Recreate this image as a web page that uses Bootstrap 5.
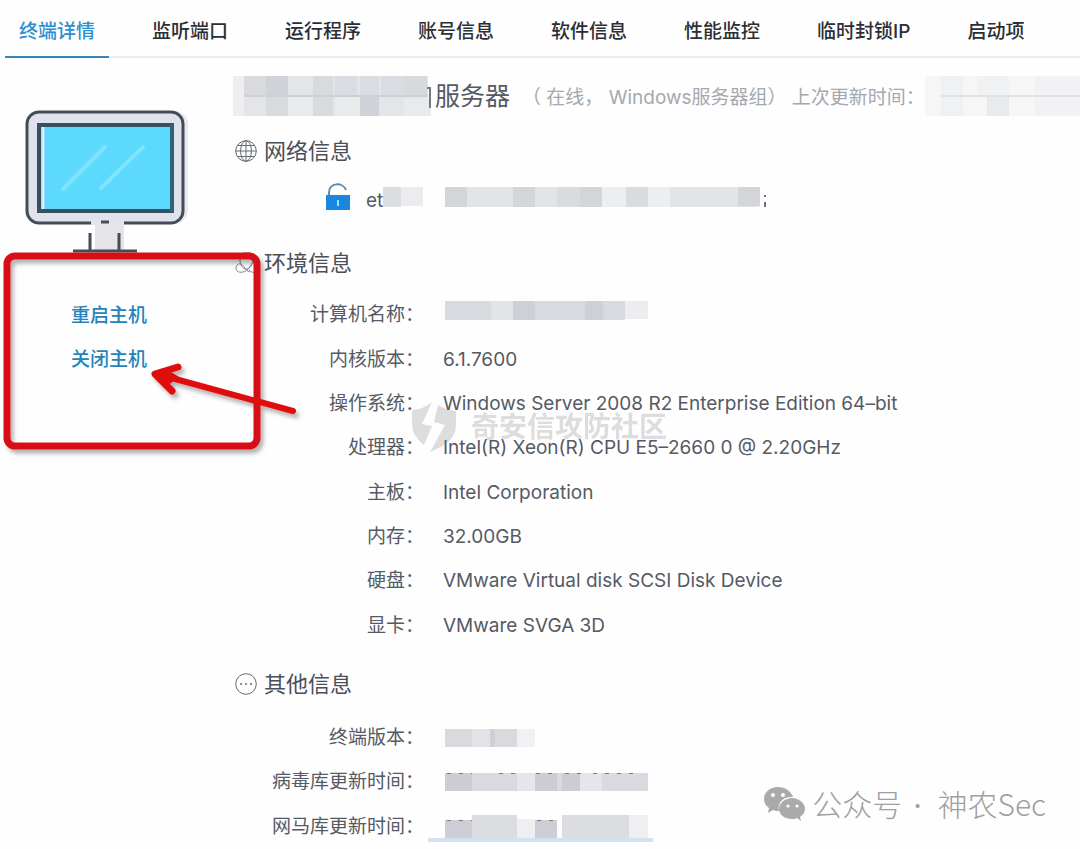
<!DOCTYPE html>
<html lang="zh-CN">
<head>
<meta charset="utf-8">
<meta name="viewport" content="width=device-width, initial-scale=1">
<title>终端详情</title>
<link href="https://cdn.jsdelivr.net/npm/bootstrap@5.3.0/dist/css/bootstrap.min.css" rel="stylesheet">
<style>
  body { font-family: Inter, "Noto Sans CJK SC", sans-serif; font-size: 19px; line-height: 28px; color: #555a64; background: #fefefe; overflow-x: hidden; }
  .tabs { gap: 29px; margin-left: 5px; border-bottom: 2px solid #ececef; }
  .tabs .nav-link { padding: 18px 14px 10px; margin-bottom: -2px; border-bottom: 2px solid transparent; color: #2c2e35; font-weight: 500; white-space: nowrap; }
  .tabs .nav-link.active { color: #2b8fd0; border-bottom-color: #3a83b8; }
  .side { width: 233px; }
  .monitor { display: block; margin: 46px 0 0 20px; }
  .host-actions { padding: 48px 0 0 71px; gap: 16px; }
  .host-actions a { color: #2583bb; font-weight: 500; text-decoration: none; }
  .marker { left: 0; top: 190px; pointer-events: none; }
  .host-head { height: 40px; margin: 18px 0 13px; }
  .host-name { font-size: 25px; font-weight: 400; margin: 0 12px 0 4px; }
  .meta { color: #a5a8ae; white-space: pre; padding-top: 4px; }
  .sec { height: 44px; gap: 7px; padding-left: 2px; }
  .sec h2 { font-size: 22px; font-weight: 400; margin: 0; color: #4a4f59; }
  .facts { display: grid; grid-template-columns: 191px 1fr; column-gap: 19px; grid-auto-rows: 1fr; align-items: center; margin: 0; }
  .facts dt { font-weight: 400; text-align: right; white-space: nowrap; }
  .facts dd { margin: 0; white-space: nowrap; }
  .facts svg { display: block; margin-left: 2px; }
  .env { min-height: 355px; margin: 8px 0 14px; }
  .env svg { margin-bottom: 8px; }
  .other { min-height: 133px; margin-top: 10px; }
  .net { height: 48px; margin-bottom: 20px; padding-left: 93px; }
  .site-mark { left: 412px; top: 344px; gap: 14px; opacity: .75; color: #d2d2d4; font-size: 28px; font-weight: 700; z-index: -1; }
  .account-mark { right: 34px; bottom: 24px; gap: 7px; font-size: 30px; line-height: 40px; font-weight: 300; color: #a0a0a0; font-family: "Noto Sans CJK SC", sans-serif; }
  .account-mark b { font-family: Inter, sans-serif; font-weight: 400; margin: 0 9px 0 11px; }
  .underline-strip { position: absolute; left: 195px; bottom: 7px; width: 225px; height: 4px; background: #cfe2f2; }
</style>
</head>
<body>
<nav>
  <ul class="nav flex-nowrap tabs">
    <li class="nav-item"><a class="nav-link active" aria-current="page" href="#">终端详情</a></li>
    <li class="nav-item"><a class="nav-link" href="#">监听端口</a></li>
    <li class="nav-item"><a class="nav-link" href="#">运行程序</a></li>
    <li class="nav-item"><a class="nav-link" href="#">账号信息</a></li>
    <li class="nav-item"><a class="nav-link" href="#">软件信息</a></li>
    <li class="nav-item"><a class="nav-link" href="#">性能监控</a></li>
    <li class="nav-item"><a class="nav-link" href="#">临时封锁IP</a></li>
    <li class="nav-item"><a class="nav-link" href="#">启动项</a></li>
  </ul>
</nav>
<div class="d-flex position-relative">
  <aside class="side flex-shrink-0 position-relative">
    <svg class="monitor" width="172" height="150" viewBox="20 104 172 150" fill="none">
      <rect x="30" y="111" width="158" height="112" rx="13" fill="#e9e9f1"/>
      <rect x="27" y="112" width="156" height="111" rx="12" fill="#dfe2ec" stroke="#454c58" stroke-width="3"/>
      <path d="M95 218h29v33H95z" fill="#e4e4e9"/>
      <path d="M91 222h28" stroke="#e4e4e9" stroke-width="6"/>
      <rect x="39" y="125" width="133" height="86" fill="#5dd9fd" stroke="#35505f" stroke-width="4"/>
      <path d="M43 127v82" stroke="#d5effa" stroke-width="3"/>
      <path d="M172 124v88" stroke="#2d6478" stroke-width="4"/>
      <path d="M63 189l42-42M101 188l42-41" stroke="#7fe5ff" stroke-width="4" stroke-linecap="round"/>
      <path d="M90 233v18M119 233v18M73 251h64M101 222h8" stroke="#454c58" stroke-width="3"/>
    </svg>
    <div class="host-actions d-flex flex-column align-items-start">
      <a href="#">重启主机</a>
      <a href="#">关闭主机</a>
    </div>
    <svg class="marker position-absolute z-1" width="310" height="220" viewBox="0 248 310 220" fill="none" stroke-linecap="round" stroke-linejoin="round" aria-hidden="true">
      <defs><filter id="soft" x="-10%" y="-10%" width="125%" height="125%"><feDropShadow dx="3" dy="4" stdDeviation="2" flood-color="#000" flood-opacity=".3"/></filter></defs>
      <g filter="url(#soft)">
        <rect x="7" y="256" width="250" height="190" rx="8" stroke="#d80f14" stroke-width="7"/>
        <path d="M293 411L168 377" stroke="#e00b0d" stroke-width="6"/>
        <path d="M178 367l-23 7 17 17" stroke="#e00b0d" stroke-width="7"/>
        <path d="M155 373l16-1 8 5-9 7z" fill="#e00b0d"/>
      </g>
    </svg>
  </aside>
  <main class="flex-grow-1">
    <header class="host-head d-flex align-items-center text-nowrap">
      <svg class="flex-shrink-0" width="198" height="40" shape-rendering="crispEdges" aria-hidden="true">
        <path fill="#e4e5e8" d="M0 0h195v40H0z"/><path fill="#eeeef0" d="M0 0h11v40H0z"/>
        <path fill="#d8dade" d="M11 0h22v20H11zM33 20h22v20H33zM80 0h20v40H80z"/><path fill="#cfd2d9" d="M33 0h22v20H33zM127 20h19v20h-19z"/>
        <path fill="#dadce1" d="M102 0h22v20h-22zM127 0h19v20h-19zM148 0h23v20h-23z"/><path fill="#d7d9dd" d="M171 0h23v20h-23z"/>
        <path fill="#e9eaec" d="M55 20h25v20H55zM102 20h25v20h-25zM171 22h27v18h-27z"/><path fill="#cdd0d5" d="M11 19h184v2H11z"/>
        <path d="M194 12h3v20" stroke="#73777f" stroke-width="2" fill="none"/>
      </svg>
      <h1 class="host-name">服务器</h1>
      <span class="meta">（ 在线， Windows服务器组） 上次更新时间：</span>
      <svg class="flex-shrink-0" width="160" height="40" shape-rendering="crispEdges" aria-hidden="true">
        <path fill="#f6f6f7" d="M0 0h160v40H0z"/><path fill="#f0f1f3" d="M16 0h22v40H16zM52 0h32v20H52z"/><path fill="#e9eaed" d="M62 20h22v20H62z"/><path fill="#f2f2f4" d="M110 0h50v40h-50z"/><path fill="#e1e2e6" d="M16 19h144v2H16z"/>
      </svg>
    </header>

    <div class="sec d-flex align-items-center">
      <svg width="22" height="22" viewBox="0 0 22 22" fill="none" stroke="#666b74" aria-hidden="true"><circle cx="11" cy="11" r="10.3"/><ellipse cx="11" cy="11" rx="5.4" ry="10.3"/><path d="M11 .7v20.6M.7 11h20.6M2.5 5.5h17M2.5 16.5h17"/></svg>
      <h2>网络信息</h2>
    </div>
    <div class="net d-flex align-items-center">
      <svg width="24" height="28" viewBox="0 0 24 28" fill="none" aria-hidden="true"><path d="M3 13V10C3 -1 17-1 20 7" stroke="#5a8fa8" stroke-width="2"/><path fill="#1b86e0" d="M0 12h24v15H0z"/><path d="M12 17v6" stroke="#9be0ff" stroke-width="2"/></svg>
      <span class="ps-3 pt-2">et</span>
      <svg width="390" height="20" shape-rendering="crispEdges" aria-hidden="true">
        <path fill="#dcdde0" d="M0 0h18v20H0z"/><path fill="#ececee" d="M18 0h22v19H18z"/>
        <path fill="#e2e4e7" d="M62 0h314v20H62z"/><path fill="#d3d5d9" d="M62 0h22v20H62zM130 0h22v20h-22zM197 0h22v20h-22zM355 0h22v19h-22z"/><path fill="#d9dbdf" d="M174 0h23v20h-23zM243 0h22v20h-22z"/><path fill="#eceef0" d="M219 0h24v20h-24zM265 0h22v20h-22z"/>
        <path fill="#6f747c" d="M381 8h2v2h-2zM381 15h2v5h-2z"/>
      </svg>
    </div>

    <div class="sec d-flex align-items-center">
      <svg width="22" height="22" viewBox="0 0 22 22" fill="none" stroke="#858991" aria-hidden="true"><path d="M5 9C5 3 8 0 12 0s7 4 6 9c-1 4-4 8-7 10-4 2-10 2-10-3 0-3 3-5 5-4 3 1 4 7 9 8"/><path d="M5 8c0 5 3 9 6 9s5-3 6-6M14 18c2 2 4 3 7 2"/></svg>
      <h2>环境信息</h2>
    </div>
    <dl class="facts env">
      <dt>计算机名称：</dt><dd><svg width="204" height="20" shape-rendering="crispEdges" aria-hidden="true"><path fill="#d8dadf" d="M0 0h180v19H0z"/><path fill="#e3e4e7" d="M46 0h22v19H46z"/><path fill="#cdd0d6" d="M68 0h22v19H68zM140 0h18v19h-18z"/><path fill="#ededf0" d="M180 0h23v18h-23z"/></svg></dd>
      <dt>内核版本：</dt><dd>6.1.7600</dd>
      <dt>操作系统：</dt><dd>Windows Server 2008 R2 Enterprise Edition 64–bit</dd>
      <dt>处理器：</dt><dd>Intel(R) Xeon(R) CPU E5–2660 0 @ 2.20GHz</dd>
      <dt>主板：</dt><dd>Intel Corporation</dd>
      <dt>内存：</dt><dd>32.00GB</dd>
      <dt>硬盘：</dt><dd>VMware Virtual disk SCSI Disk Device</dd>
      <dt>显卡：</dt><dd>VMware SVGA 3D</dd>
    </dl>

    <div class="sec d-flex align-items-center">
      <svg width="22" height="22" viewBox="0 0 22 22" fill="none" stroke="#666b74" aria-hidden="true"><circle cx="11" cy="11" r="10.3"/><path d="M5 11h2M10 11h2M15 11h2" stroke-width="1.6"/></svg>
      <h2>其他信息</h2>
    </div>
    <div class="position-relative">
      <dl class="facts other">
        <dt>终端版本：</dt><dd><svg width="92" height="18" shape-rendering="crispEdges" aria-hidden="true"><path fill="#d9dade" d="M0 0h72v18H0z"/><path fill="#e3e3e7" d="M27 0h18v18H27z"/><path fill="#cfd0d6" d="M45 0h5v18h-5z"/><path fill="#f1f1f3" d="M72 0h18v18H72z"/></svg></dd>
        <dt>病毒库更新时间：</dt><dd><svg width="204" height="20" shape-rendering="crispEdges" aria-hidden="true"><path fill="#d9dadf" d="M0 1h203v18H0z"/><path fill="#cccdd4" d="M0 1h27v18H0zM90 1h22v18H90zM117 1h18v18h-18z"/><path fill="#e6e6ea" d="M72 1h18v18H72zM135 1h22v18h-22z"/><path d="M2 1h25M54 1h18M91 1h20M120 1h18M148 1h42" stroke="#777a82" stroke-dasharray="4 8"/></svg></dd>
        <dt>网马库更新时间：</dt><dd><svg width="204" height="24" shape-rendering="crispEdges" aria-hidden="true"><path fill="#dcdde1" d="M27 0h45v23H27zM117 0h67v23h-67z"/><path fill="#cdced5" d="M0 5h27v18H0zM90 5h22v18H90z"/><path fill="#efeff2" d="M72 4h18v19H72zM184 0h19v23h-19z"/><path d="M2 5h25M92 5h20" stroke="#777a82" stroke-dasharray="4 8"/></svg></dd>
      </dl>
      <div class="underline-strip"></div>
    </div>

    <div class="site-mark position-absolute d-flex align-items-center text-nowrap">
      <svg width="45" height="50" viewBox="0 0 45 50" fill="currentColor" aria-hidden="true"><path d="M0 8Q12 7 20 0l-10 22 10 2-8 19Q0 34 0 22zM26 3Q34 8 44 9v14c0 13-9 20-26 27l15-27-11-3z"/></svg>
      <span>奇安信攻防社区</span>
    </div>
  </main>
  <div class="account-mark position-absolute d-flex align-items-center text-nowrap">
    <svg width="42" height="36" viewBox="0 0 42 36" fill="#aaa" aria-hidden="true"><path d="M15 1C7 1 1 6 1 13c0 4 2 7 5 9l-1 5 5-3c2 1 4 1 6 1C14 16 21 10 30 11 28 5 22 1 15 1z"/><path d="M29 12c-7 0-13 5-13 11s6 10 13 10c2 0 3 0 5-1l4 3-1-4c3-2 5-5 5-8 0-6-6-11-13-11z"/><g fill="#fefefe"><circle cx="10" cy="9" r="2"/><circle cx="20" cy="9" r="2"/><circle cx="25" cy="20" r="1.6"/><circle cx="34" cy="20" r="1.6"/></g></svg>
    <span>公众号<b>·</b> 神农Sec</span>
  </div>
</div>
<script src="https://cdn.jsdelivr.net/npm/bootstrap@5.3.0/dist/js/bootstrap.bundle.min.js"></script>
</body>
</html>
